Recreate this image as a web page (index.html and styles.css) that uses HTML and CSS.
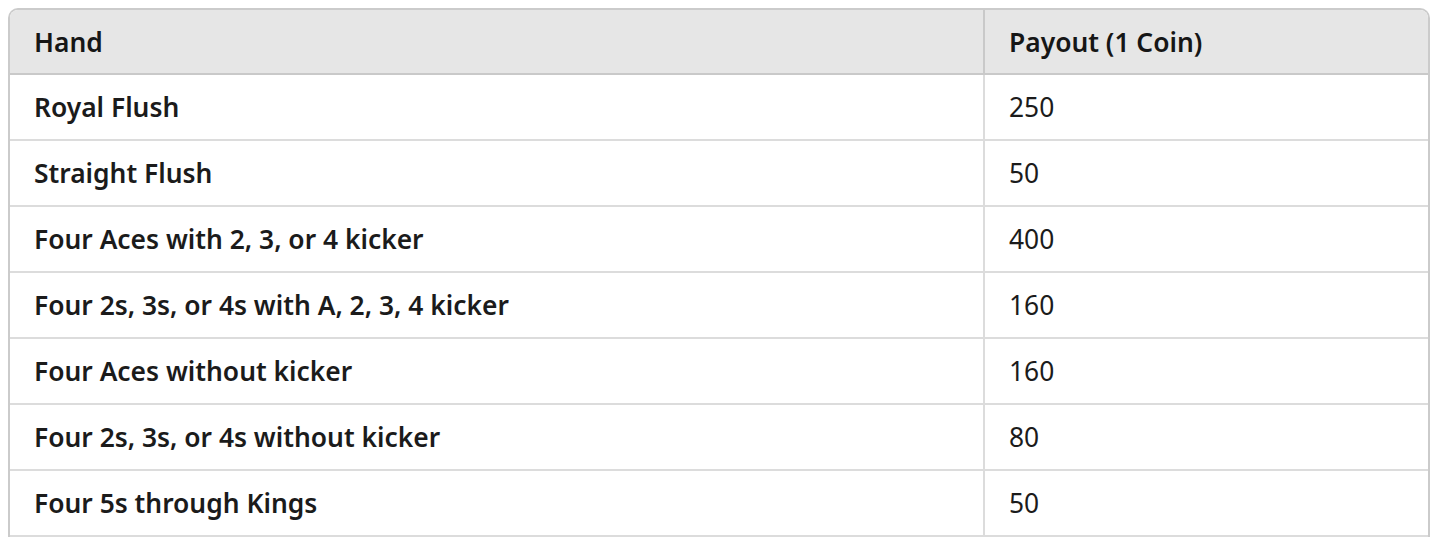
FILE: index.html
```html
<!DOCTYPE html>
<html lang="en">
<head>
<meta charset="utf-8">
<title>Payout Table</title>
<link rel="stylesheet" href="styles.css">
</head>
<body>
<div class="table-wrap">
  <table class="payout">
    <thead>
      <tr><th class="col-hand">Hand</th><th class="col-pay">Payout (1 Coin)</th></tr>
    </thead>
    <tbody>
      <tr><td class="hand">Royal Flush</td><td>250</td></tr>
      <tr><td class="hand">Straight Flush</td><td>50</td></tr>
      <tr><td class="hand">Four Aces with 2, 3, or 4 kicker</td><td>400</td></tr>
      <tr><td class="hand">Four 2s, 3s, or 4s with A, 2, 3, 4 kicker</td><td>160</td></tr>
      <tr><td class="hand">Four Aces without kicker</td><td>160</td></tr>
      <tr><td class="hand">Four 2s, 3s, or 4s without kicker</td><td>80</td></tr>
      <tr><td class="hand">Four 5s through Kings</td><td>50</td></tr>
    </tbody>
  </table>
</div>
</body>
</html>
```
FILE: styles.css
```css
html, body {
  margin: 0;
  padding: 0;
  background: #ffffff;
}
body {
  padding: 8px;
  font-family: "Noto Sans", "Open Sans", "DejaVu Sans", sans-serif;
  font-size: 26.4px;
  color: #1b1b1b;
}
.table-wrap {
  border: 2px solid #cbcbcb;
  border-bottom: none;
  border-radius: 10px 10px 0 0;
  overflow: hidden;
}
.payout {
  width: 100%;
  border-collapse: collapse;
  table-layout: fixed;
}
.col-hand {
  width: 925px;
}
.payout th,
.payout td {
  text-align: left;
  line-height: 36px;
  padding: 14px 24px;
  vertical-align: middle;
}
.payout th {
  background: #e6e6e6;
  font-weight: 600;
  color: #161616;
  border-bottom: 2px solid #c9c9c9;
  padding-top: 14px;
  padding-bottom: 13px;
}
.payout th + th {
  border-left: 2px solid #c9c9c9;
}
.payout td {
  font-weight: 400;
  border-bottom: 2px solid #dcdcdc;
}
.payout td + td {
  border-left: 2px solid #dcdcdc;
}
.payout td.hand {
  font-weight: 600;
}
```
